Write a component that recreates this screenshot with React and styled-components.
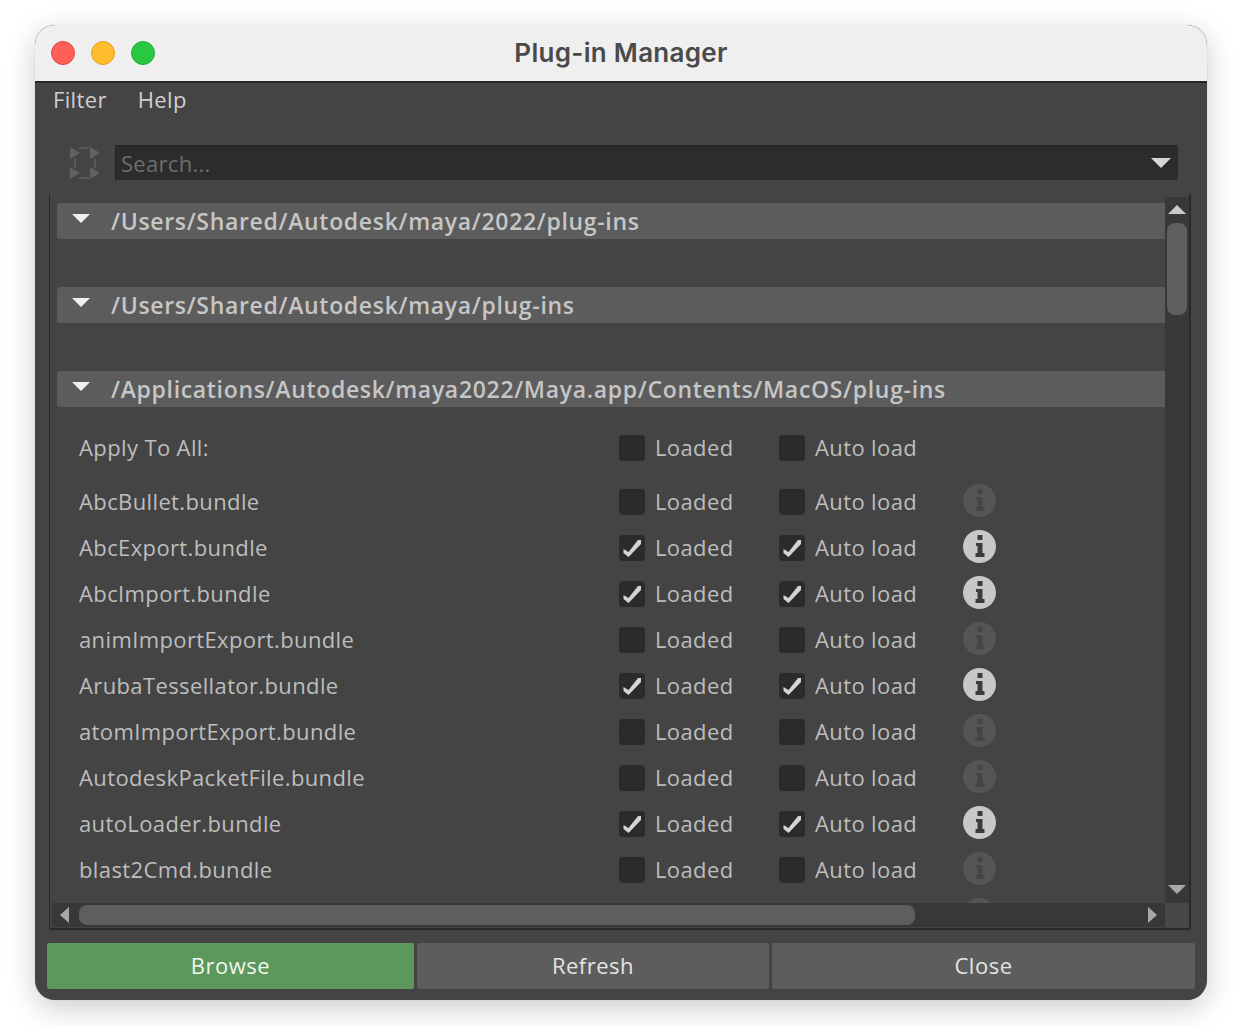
import React from 'react';
import styled, { createGlobalStyle } from 'styled-components';

const GlobalStyle = createGlobalStyle`
  html, body {
    margin: 0;
    padding: 0;
    background: #fff;
    font-family: "Open Sans", "DejaVu Sans", sans-serif;
  }
`;

const Page = styled.div`
  width: 1242px;
  height: 1026px;
  padding: 25px 35px 26px;
  box-sizing: border-box;
  overflow: hidden;
`;

const Window = styled.div`
  height: 975px;
  display: flex;
  flex-direction: column;
  border-radius: 20px;
  overflow: hidden;
  background: #444;
  box-shadow: 0 8px 30px rgba(0, 0, 0, 0.2), 0 0 1px rgba(0, 0, 0, 0.3);
`;

const TitleBar = styled.div`
  position: relative;
  height: 58px;
  box-sizing: border-box;
  padding-bottom: 2px;
  flex: none;
  display: flex;
  align-items: center;
  justify-content: center;
  background: #efefef;
  border-bottom: 2px solid #262626;
`;

const Lights = styled.div`
  position: absolute;
  left: 16px;
  top: 16px;
  display: flex;
  gap: 16px;
`;

const Light = styled.span`
  width: 24px;
  height: 24px;
  box-sizing: border-box;
  border-radius: 50%;
  background: ${(p) => p.$color};
  border: 1px solid ${(p) => p.$edge};
`;

const Title = styled.div`
  font-family: Inter, "Open Sans", sans-serif;
  font-size: 26px;
  font-weight: 600;
  letter-spacing: 0.3px;
  color: #4a4a4a;
`;

const MenuBar = styled.div`
  height: 36px;
  box-sizing: border-box;
  padding: 0 0 4px 18px;
  flex: none;
  display: flex;
  align-items: center;
  gap: 31px;
  font-size: 22px;
  letter-spacing: 0.35px;
  color: #cfcfcf;
`;

const SearchRow = styled.div`
  display: flex;
  align-items: center;
  gap: 15px;
  height: 35px;
  margin-top: 26px;
  padding: 0 29px 0 35px;
  flex: none;
`;

const SearchBox = styled.div`
  flex: 1;
  height: 35px;
  box-sizing: border-box;
  display: flex;
  align-items: center;
  justify-content: space-between;
  padding: 0 7px 0 5px;
  background: #2c2c2c;
  border-top: 1px solid #222;
  border-left: 1px solid #222;
  border-radius: 2px;
  font-size: 22px;
  letter-spacing: 0.3px;
  color: #6d6d6d;
`;

const Panel = styled.div`
  margin: 14px 16px 0 14px;
  height: 736px;
  flex: none;
  box-sizing: border-box;
  display: grid;
  grid-template-columns: 1fr 24px;
  grid-template-rows: 1fr 24px;
  border-left: 1px solid #2a2a2a;
  border-right: 2px solid #2a2a2a;
  border-bottom: 2px solid #2a2a2a;
  padding: 0 0 1px 2px;
`;

const ListArea = styled.div`
  overflow: hidden;
  padding: 9px 0 0 5px;
`;

const Section = styled.div`
  height: 36px;
  box-sizing: border-box;
  padding-left: 15px;
  display: flex;
  align-items: center;
  gap: 21px;
  margin-bottom: ${(p) => p.$gap}px;
  background: #5c5c5c;
  border-radius: 3px 0 0 3px;
  font-size: 23px;
  font-weight: 600;
  letter-spacing: 0.68px;
  color: #c6c6c6;
`;

const SectionCaret = styled.span`
  display: flex;
  margin-top: -6px;
`;

const Rows = styled.div`
  padding-left: 22px;
`;

const Row = styled.div`
  height: 46px;
  margin-bottom: ${(p) => p.$gap || 0}px;
  display: grid;
  grid-template-columns: 540px 160px 184px 36px;
  align-items: center;
  font-size: 22px;
  letter-spacing: 0.38px;
  color: #bdbdbd;
`;

const Label = styled.span`
  margin-top: -2px;
`;

const Toggle = styled.div`
  display: flex;
  align-items: center;
  gap: 10px;
`;

const Box = styled.div`
  width: 26px;
  height: 26px;
  border-radius: 4px;
  background: #2b2b2b;
`;

const Info = styled.div`
  grid-column: 4;
  width: 33px;
  height: 33px;
  border-radius: 50%;
  background: ${(p) => (p.$on ? '#c8c8c8' : '#555')};
  display: flex;
  align-items: center;
  justify-content: center;
  margin-top: -4px;
`;

const VScroll = styled.div`
  display: flex;
  flex-direction: column;
  align-items: center;
  margin-top: 3px;
  padding: 8px 0 9px;
  background: #383838;
`;

const VThumb = styled.div`
  width: 20px;
  height: 92px;
  margin-top: 9px;
  border-radius: 8px;
  background: #5e5e5e;
`;

const Spacer = styled.div`
  flex: 1;
`;

const HScroll = styled.div`
  display: flex;
  align-items: center;
  background: #383838;
  padding: 0 8px;
`;

const HThumb = styled.div`
  width: 836px;
  height: 20px;
  margin-left: 10px;
  border-radius: 8px;
  background: #5e5e5e;
`;

const Corner = styled.div`
  background: #484848;
`;

const Buttons = styled.div`
  display: grid;
  grid-template-columns: 367px 352px 423px;
  gap: 3px;
  margin: 13px 0 0 12px;
  height: 46px;
`;

const Button = styled.div`
  display: flex;
  align-items: center;
  justify-content: center;
  padding-bottom: 2px;
  box-sizing: border-box;
  border-radius: 2px;
  font-size: 22px;
  letter-spacing: 0.5px;
  color: ${(p) => (p.$primary ? '#f0f5f0' : '#e4e4e4')};
  background: ${(p) => (p.$primary ? '#5c975c' : '#5d5d5d')};
`;

const Arrow = ({ dir, color = '#c8c8c8', w = 18, h = 9 }) => {
  const pts = {
    up: `0,${h} ${w},${h} ${w / 2},0`,
    down: `0,0 ${w},0 ${w / 2},${h}`,
    left: `${w},0 ${w},${h} 0,${h / 2}`,
    right: `0,0 0,${h} ${w},${h / 2}`,
  }[dir];
  return (
    <svg width={w} height={h} viewBox={`0 0 ${w} ${h}`} style={{ flex: 'none', display: 'block' }}>
      <polygon points={pts} fill={color} />
    </svg>
  );
};

const Check = () => (
  <svg width="26" height="26" viewBox="0 0 26 26" style={{ display: 'block' }}>
    <polygon points="4.5,14 9.5,17 19,5 22,5 22,9 9.5,22 4.5,18" fill="#d4d4d4" />
  </svg>
);

const InfoGlyph = ({ color }) => (
  <svg width="10" height="22" viewBox="0 0 10 22" style={{ display: 'block' }}>
    <rect x="2.5" y="0" width="5" height="5" fill={color} />
    <path d="M1 8 H7.5 V18 H9.5 V22 H0.5 V18 H2.5 V11 H1 Z" fill={color} />
  </svg>
);

const ShelfIcon = () => (
  <svg width="30" height="32" viewBox="0 0 30 32" style={{ flex: 'none' }}>
    <g fill="#616161">
      <polygon points="0,0 10,6 0,12" />
      <polygon points="20,0 30,6 20,12" />
      <polygon points="0,20 10,26 0,32" />
      <polygon points="20,20 30,26 20,32" />
    </g>
    <g fill="none" stroke="#585858" strokeWidth="2">
      <path d="M9 1 H19 M5 11 V21 M25 11 V21 M9 31 H19" />
    </g>
  </svg>
);

const Toggles = ({ on }) => (
  <>
    <Toggle>
      <Box>{on && <Check />}</Box>
      <Label>Loaded</Label>
    </Toggle>
    <Toggle>
      <Box>{on && <Check />}</Box>
      <Label>Auto load</Label>
    </Toggle>
  </>
);

const plugins = [
  ['AbcBullet.bundle', false],
  ['AbcExport.bundle', true],
  ['AbcImport.bundle', true],
  ['animImportExport.bundle', false],
  ['ArubaTessellator.bundle', true],
  ['atomImportExport.bundle', false],
  ['AutodeskPacketFile.bundle', false],
  ['autoLoader.bundle', true],
  ['blast2Cmd.bundle', false],
];

const folders = [
  ['/Users/Shared/Autodesk/maya/2022/plug-ins', 48],
  ['/Users/Shared/Autodesk/maya/plug-ins', 48],
  ['/Applications/Autodesk/maya2022/Maya.app/Contents/MacOS/plug-ins', 18],
];

export default function App() {
  return (
    <Page>
      <GlobalStyle />
      <Window>
        <TitleBar>
          <Lights>
            <Light $color="#ff5f57" $edge="#e0443e" />
            <Light $color="#febc2e" $edge="#dfa023" />
            <Light $color="#28c840" $edge="#1fae34" />
          </Lights>
          <Title>Plug-in Manager</Title>
        </TitleBar>
        <MenuBar>
          <span>Filter</span>
          <span>Help</span>
        </MenuBar>
        <SearchRow>
          <ShelfIcon />
          <SearchBox>
            <span>Search...</span>
            <Arrow dir="down" color="#d6d6d6" w={20} h={10} />
          </SearchBox>
        </SearchRow>
        <Panel>
          <ListArea>
            {folders.map(([path, gap]) => (
              <Section key={path} $gap={gap}>
                <SectionCaret>
                  <Arrow dir="down" color="#efefef" />
                </SectionCaret>
                {path}
              </Section>
            ))}
            <Rows>
              <Row $gap={8}>
                <Label>Apply To All:</Label>
                <Toggles on={false} />
              </Row>
              {plugins.map(([name, on]) => (
                <Row key={name}>
                  <Label>{name}</Label>
                  <Toggles on={on} />
                  <Info $on={on}>
                    <InfoGlyph color={on ? '#3c3c3c' : '#454545'} />
                  </Info>
                </Row>
              ))}
              {/* next row is scrolled off, only the top of its info button shows */}
              <Row>
                <Info>
                  <InfoGlyph color="#454545" />
                </Info>
              </Row>
            </Rows>
          </ListArea>
          <VScroll>
            <Arrow dir="up" />
            <VThumb />
            <Spacer />
            <Arrow dir="down" color="#a8a8a8" />
          </VScroll>
          <HScroll>
            <Arrow dir="left" color="#a8a8a8" w={9} h={16} />
            <HThumb />
            <Spacer />
            <Arrow dir="right" color="#a8a8a8" w={9} h={16} />
          </HScroll>
          <Corner />
        </Panel>
        <Buttons>
          <Button $primary>Browse</Button>
          <Button>Refresh</Button>
          <Button>Close</Button>
        </Buttons>
      </Window>
    </Page>
  );
}
